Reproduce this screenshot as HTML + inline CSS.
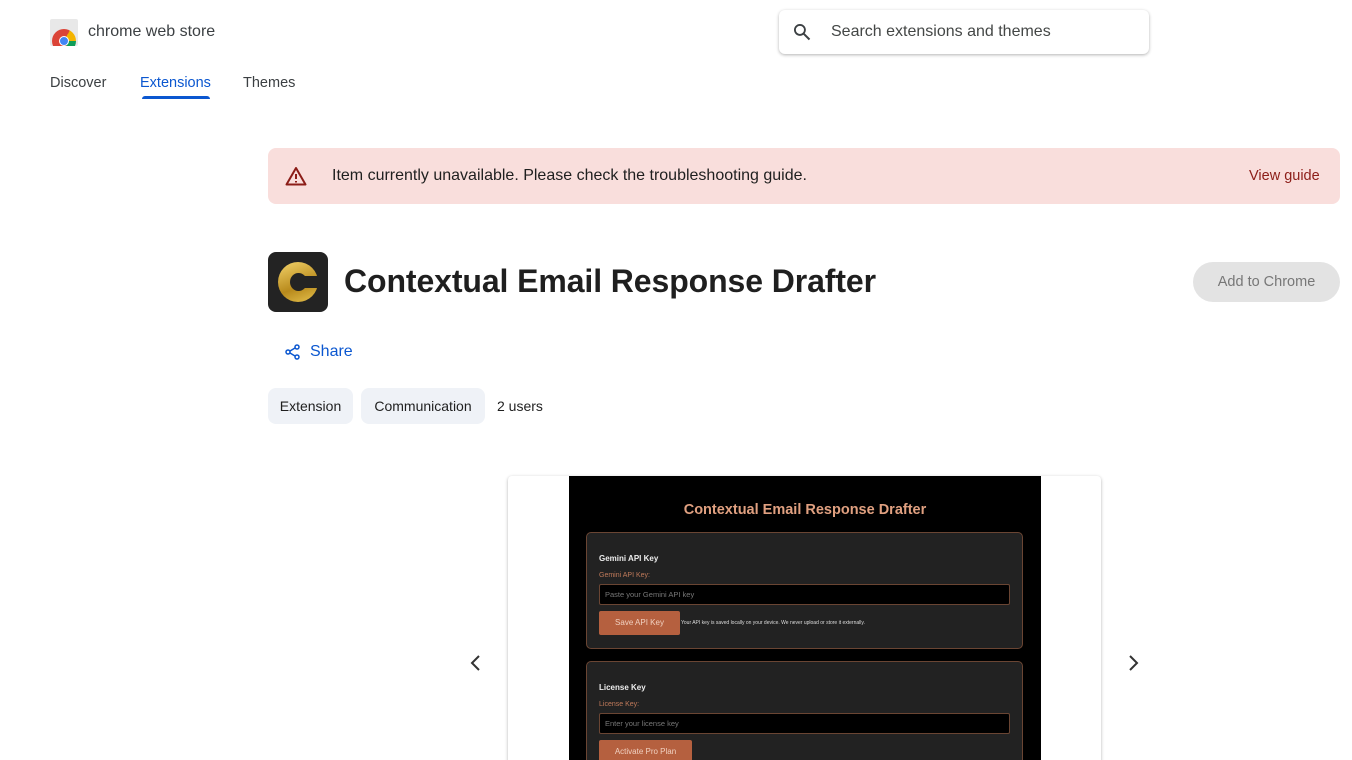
<!DOCTYPE html>
<html><head><meta charset="utf-8"><style>
*{margin:0;padding:0;box-sizing:border-box}
html,body{width:1352px;height:760px;overflow:hidden}
body{background:#fff;font-family:"Liberation Sans",sans-serif;color:#1f1f1f;position:relative}
.a{position:absolute}
</style></head><body>
<div class="a" style="left:50px;top:19px;width:28px;height:27px;background:#e8e8e8;border-radius:2px;overflow:hidden">
<div class="a" style="left:2px;top:10px;width:24px;height:24px;border-radius:50%;background:conic-gradient(from -90deg,#db4437 0 33%,#f4b400 33% 50%,#0f9d58 50% 67%,#db4437 67%)"></div>
<div class="a" style="left:9px;top:17px;width:10px;height:10px;border-radius:50%;background:#4285f4;border:1.5px solid #fff"></div>
</div>
<div class="a" style="left:88px;top:23px;font-size:16px;color:#3c4043">chrome web store</div>
<div class="a" style="left:50px;top:75px;font-size:14.5px;color:#3c4043">Discover</div>
<div class="a" style="left:140px;top:75px;font-size:14.5px;color:#0b57d0">Extensions</div>
<div class="a" style="left:142px;top:96px;width:68px;height:3px;background:#0b57d0;border-radius:3px 3px 0 0"></div>
<div class="a" style="left:243px;top:75px;font-size:14.5px;color:#3c4043">Themes</div>
<div class="a" style="left:779px;top:10px;width:370px;height:44px;border-radius:6px;box-shadow:0 1px 3px rgba(0,0,0,.3)"></div>
<svg class="a" style="left:792px;top:22px" width="20" height="20" viewBox="0 0 24 24"><circle cx="9.5" cy="9.5" r="6" fill="none" stroke="#3c4043" stroke-width="2.2"/><path d="M14 14l7 7" stroke="#3c4043" stroke-width="2.4"/></svg>
<div class="a" style="left:831px;top:23px;font-size:16px;color:#444746">Search extensions and themes</div>
<div class="a" style="left:268px;top:148px;width:1072px;height:56px;background:#f9dedc;border-radius:8px"></div>
<svg class="a" style="left:285px;top:166px" width="22" height="20" viewBox="0 0 22 20"><path d="M11 2L20.5 18.5H1.5Z" fill="none" stroke="#8c1d18" stroke-width="2" stroke-linejoin="round"/><path d="M11 8v5M11 15v1.5" stroke="#8c1d18" stroke-width="2"/></svg>
<div class="a" style="left:332px;top:167px;font-size:16px;color:#1f1f1f">Item currently unavailable. Please check the troubleshooting guide.</div>
<div class="a" style="left:1249px;top:168px;font-size:14.5px;color:#8c1d18">View guide</div>
<div class="a" style="left:268px;top:252px;width:60px;height:60px;background:#232323;border-radius:8px;overflow:hidden">
<div class="a" style="left:10px;top:10px;width:40px;height:40px;border-radius:50%;background:linear-gradient(160deg,#f3d36a,#b88a1c 60%,#e5c14e)"></div>
<div class="a" style="left:22px;top:21px;width:17px;height:18px;border-radius:50%;background:#232323"></div>
<div class="a" style="left:36px;top:24px;width:20px;height:12px;background:#232323"></div>
</div>
<div class="a" style="left:344px;top:263px;font-size:32px;font-weight:bold;color:#1f1f1f;letter-spacing:-0.1px">Contextual Email Response Drafter</div>
<div class="a" style="left:1193px;top:262px;width:147px;height:40px;background:#e3e3e3;border-radius:20px;font-size:14.5px;color:#777;text-align:center;line-height:40px">Add to Chrome</div>
<svg class="a" style="left:285px;top:344px" width="16" height="16" viewBox="0 0 16 16"><circle cx="12" cy="3" r="2" fill="none" stroke="#0b57d0" stroke-width="1.5"/><circle cx="3" cy="8" r="2" fill="none" stroke="#0b57d0" stroke-width="1.5"/><circle cx="12" cy="13" r="2" fill="none" stroke="#0b57d0" stroke-width="1.5"/><path d="M10 4L5 7M5 9l5 3" stroke="#0b57d0" stroke-width="1.5"/></svg>
<div class="a" style="left:310px;top:343px;font-size:16px;color:#0b57d0">Share</div>
<div class="a" style="left:268px;top:388px;width:85px;height:36px;background:#eff2f7;border-radius:8px;font-size:14px;line-height:36px;text-align:center">Extension</div>
<div class="a" style="left:361px;top:388px;width:124px;height:36px;background:#eff2f7;border-radius:8px;font-size:14px;line-height:36px;text-align:center">Communication</div>
<div class="a" style="left:497px;top:398px;font-size:14px">2 users</div>
<div class="a" style="left:508px;top:476px;width:593px;height:290px;border-radius:4px;box-shadow:0 1px 3px rgba(0,0,0,.3);background:#fff"></div>
<div class="a" style="left:569px;top:476px;width:472px;height:284px;background:#000;overflow:hidden">
<div class="a" style="left:0;top:26px;width:472px;text-align:center;font-size:14.5px;font-weight:bold;color:#e0a080">Contextual Email Response Drafter</div>
<div class="a" style="left:17px;top:56px;width:437px;height:117px;background:#222;border:1px solid #6a4533;border-radius:5px">
<div class="a" style="left:12px;top:21px;font-size:8px;font-weight:bold;color:#eee">Gemini API Key</div>
<div class="a" style="left:12px;top:39px;font-size:7px;color:#c07a5a">Gemini API Key:</div>
<div class="a" style="left:12px;top:51px;width:411px;height:21px;background:#000;border:1px solid #6a4533;border-radius:2px;font-size:7.5px;color:#777;padding:5px 5px">Paste your Gemini API key</div>
<div class="a" style="left:12px;top:78px;width:81px;height:24px;background:#b5603f;border-radius:2px;font-size:8px;color:#f0d0c0;text-align:center;line-height:24px">Save API Key</div>
<div class="a" style="left:94px;top:87px;font-size:5px;color:#ddd">Your API key is saved locally on your device. We never upload or store it externally.</div>
</div>
<div class="a" style="left:17px;top:185px;width:437px;height:120px;background:#222;border:1px solid #6a4533;border-radius:5px">
<div class="a" style="left:12px;top:21px;font-size:8px;font-weight:bold;color:#eee">License Key</div>
<div class="a" style="left:12px;top:39px;font-size:7px;color:#c07a5a">License Key:</div>
<div class="a" style="left:12px;top:51px;width:411px;height:21px;background:#000;border:1px solid #6a4533;border-radius:2px;font-size:7.5px;color:#777;padding:5px 5px">Enter your license key</div>
<div class="a" style="left:12px;top:78px;width:93px;height:24px;background:#b5603f;border-radius:2px;font-size:8px;color:#f0d0c0;text-align:center;line-height:24px">Activate Pro Plan</div>
</div></div>
<svg class="a" style="left:468px;top:654px" width="16" height="18" viewBox="0 0 16 18"><path d="M11 2L4 9l7 7" fill="none" stroke="#333" stroke-width="2"/></svg>
<svg class="a" style="left:1125px;top:654px" width="16" height="18" viewBox="0 0 16 18"><path d="M5 2l7 7-7 7" fill="none" stroke="#333" stroke-width="2"/></svg>
</body></html>
